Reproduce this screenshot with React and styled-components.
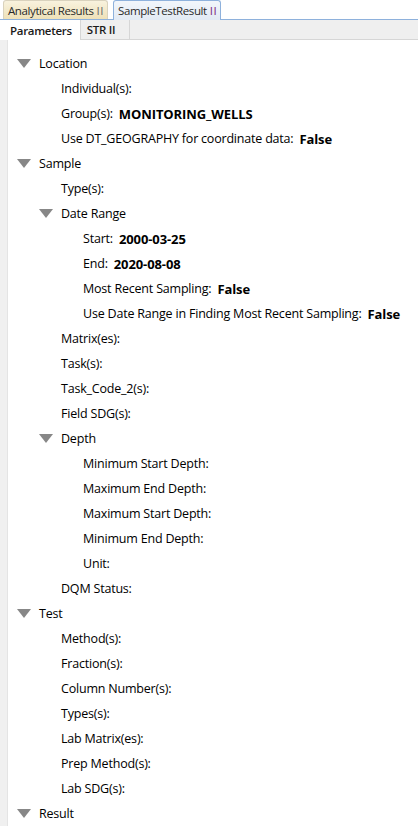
import React from 'react';
import styled, { createGlobalStyle } from 'styled-components';

const Global = createGlobalStyle`
  html, body { margin: 0; padding: 0; background: #fff; }
  body { font-family: "Open Sans", "Noto Sans", sans-serif; font-size: 12.5px; color: #000; }
`;

const Page = styled.div`
  width: 418px;
  height: 826px;
  overflow: hidden;
  display: flex;
  flex-direction: column;
`;

const EditorTabs = styled.div`
  height: 22px;
  display: flex;
  align-items: flex-end;
  padding-left: 3px;
  gap: 5px;
  border-bottom: 1px solid #8eb1dc;
  box-sizing: border-box;
`;

const EditorTab = styled.div`
  padding: 0 3px 0 4px;
  box-sizing: border-box;
  display: flex;
  align-items: center;
  font-size: 11.5px;
  letter-spacing: -0.4px;
  color: #2a2a2a;
  border: 1px solid ${p => (p.$active ? '#8eb1dc' : '#d9d2bd')};
  border-bottom: none;
  border-radius: 3px 3px 0 0;
  background: ${p =>
    p.$active
      ? 'linear-gradient(#f2f6fb, #e2eaf4)'
      : 'linear-gradient(#f8f2de, #eee1b8)'};
  margin-bottom: ${p => (p.$active ? '-1px' : '0')};
  height: ${p => (p.$active ? '20px' : '19px')};
`;

const Pin = styled.span`
  margin-left: 3px;
  color: ${p => p.$c};
  letter-spacing: 0.5px;
`;

const SubTabs = styled.div`
  height: 22px;
  display: flex;
  background: #efefef;
  border-bottom: 1px solid #d6d6d6;
  box-sizing: border-box;
`;

const SubTab = styled.div`
  padding: 0 ${p => (p.$active ? '8px' : '14px')} 0 ${p => (p.$active ? '10px' : '6px')};
  display: flex;
  align-items: center;
  font-size: 11.5px;
  letter-spacing: -0.3px;
  font-weight: 600;
  color: #1a1a1a;
  background: ${p => (p.$active ? '#fff' : '#efefef')};
  border-right: 1px solid #d6d6d6;
  margin-bottom: ${p => (p.$active ? '-1px' : '0')};
`;

const Body = styled.div`
  flex: 1;
  display: flex;
`;

const Gutter = styled.div`
  width: 7px;
  background: #f0f0f0;
  border-right: 1px solid #e4e4e4;
`;

const Tree = styled.div`
  flex: 1;
  padding-top: 11px;
  white-space: nowrap;
  letter-spacing: -0.2px;
`;

const Row = styled.div`
  height: 25px;
  display: flex;
  align-items: center;
  padding-left: ${p => 9 + p.$level * 22}px;
`;

const Toggle = styled.svg`
  width: 14px;
  height: 9px;
  margin-right: 8px;
  flex: none;
`;

const Spacer = styled.span`
  width: 22px;
  flex: none;
`;

const Value = styled.b`
  font-weight: 700;
  font-size: 13px;
  letter-spacing: -0.1px;
  margin-left: 6px;
`;

function Arrow() {
  return (
    <Toggle viewBox="0 0 14 9">
      <polygon points="0,0 14,0 7,9" fill="#878787" />
    </Toggle>
  );
}

const rows = [
  [0, 'Location', true],
  [1, 'Individual(s):'],
  [1, 'Group(s):', false, 'MONITORING_WELLS'],
  [1, 'Use DT_GEOGRAPHY for coordinate data:', false, 'False'],
  [0, 'Sample', true],
  [1, 'Type(s):'],
  [1, 'Date Range', true],
  [2, 'Start:', false, '2000-03-25'],
  [2, 'End:', false, '2020-08-08'],
  [2, 'Most Recent Sampling:', false, 'False'],
  [2, 'Use Date Range in Finding Most Recent Sampling:', false, 'False'],
  [1, 'Matrix(es):'],
  [1, 'Task(s):'],
  [1, 'Task_Code_2(s):'],
  [1, 'Field SDG(s):'],
  [1, 'Depth', true],
  [2, 'Minimum Start Depth:'],
  [2, 'Maximum End Depth:'],
  [2, 'Maximum Start Depth:'],
  [2, 'Minimum End Depth:'],
  [2, 'Unit:'],
  [1, 'DQM Status:'],
  [0, 'Test', true],
  [1, 'Method(s):'],
  [1, 'Fraction(s):'],
  [1, 'Column Number(s):'],
  [1, 'Types(s):'],
  [1, 'Lab Matrix(es):'],
  [1, 'Prep Method(s):'],
  [1, 'Lab SDG(s):'],
  [0, 'Result', true],
];

export default function App() {
  return (
    <Page>
      <Global />
      <EditorTabs>
        <EditorTab>
          Analytical Results<Pin $c="#6b6b6b">II</Pin>
        </EditorTab>
        <EditorTab $active>
          SampleTestResult<Pin $c="#7a1f7a">II</Pin>
        </EditorTab>
      </EditorTabs>
      <SubTabs>
        <SubTab $active>Parameters</SubTab>
        <SubTab>STR II</SubTab>
      </SubTabs>
      <Body>
        <Gutter />
        <Tree>
          {rows.map(([level, label, group, value], i) => (
            <Row key={i} $level={level}>
              {group ? <Arrow /> : <Spacer />}
              <span>{label}</span>
              {value && <Value>{value}</Value>}
            </Row>
          ))}
        </Tree>
      </Body>
    </Page>
  );
}
